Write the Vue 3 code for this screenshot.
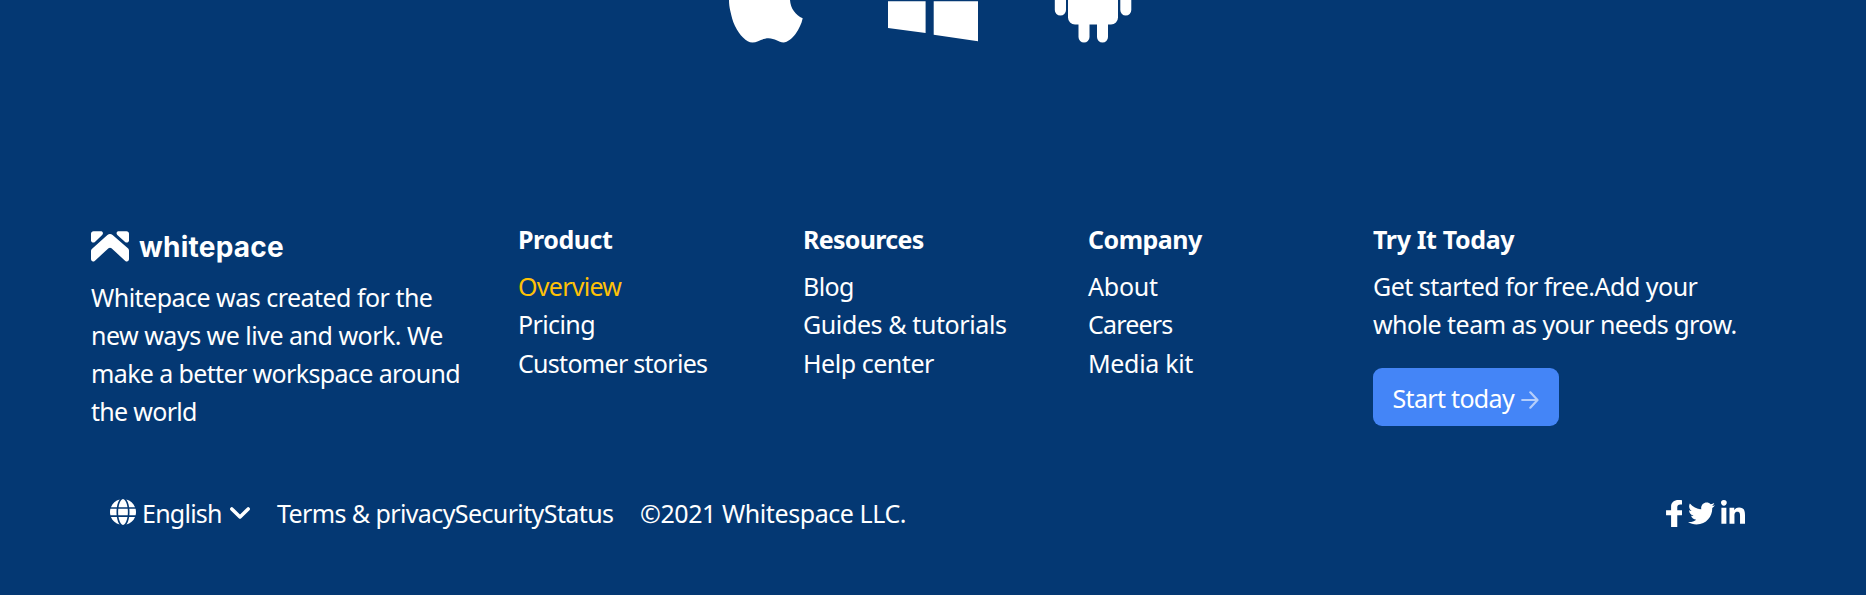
<script setup>
const about = [
  { text: 'Whitepace was created for the', track: -0.52 },
  { text: 'new ways we live and work. We', track: -0.5 },
  { text: 'make a better workspace around', track: -0.63 },
  { text: 'the world', track: -0.7 },
]

const columns = [
  {
    title: 'Product',
    track: -0.46,
    links: [
      { text: 'Overview', track: -0.72, active: true },
      { text: 'Pricing', track: -0.6 },
      { text: 'Customer stories', track: -0.71 },
    ],
  },
  {
    title: 'Resources',
    track: -0.7,
    links: [
      { text: 'Blog', track: -0.6 },
      { text: 'Guides & tutorials', track: -0.4 },
      { text: 'Help center', track: -0.46 },
    ],
  },
  {
    title: 'Company',
    track: -0.51,
    links: [
      { text: 'About', track: -0.23 },
      { text: 'Careers', track: -0.83 },
      { text: 'Media kit', track: -0.33 },
    ],
  },
]

const pitch = [
  { text: 'Get started for free.Add your', track: -0.5 },
  { text: 'whole team as your needs grow.', track: -0.53 },
]

const tracking = (item) => ({ letterSpacing: item.track + 'px' })
</script>

<template>
  <footer class="page">
    <div class="platforms">
      <svg class="apple" width="76" height="45" viewBox="0 0 76 45" fill="#fff">
        <path d="M2 0C2 4 2.500 7 3.200 10.500C4.500 16 5.500 21 8 26C10.500 31 13 34.500 16 37.500C19.500 41 22 42.500 25.500 42.500C30.500 42.500 35 38.300 41.500 38.300C48 38.300 51.500 42.500 56.500 42.500C60.500 42.500 65.500 38 68.500 34C72 29 74.500 24 75.700 18.300C68.500 15 63.500 8.500 63 0Z" />
      </svg>
      <svg class="windows" width="90" height="45" viewBox="0 0 90 45" fill="#fff">
        <path d="M0 1.200H37.600V33L0 28ZM45.700 1.200H90V41.300L45.700 34.800Z" />
      </svg>
      <svg class="android" width="78" height="45" viewBox="0 0 78 45" fill="#fff">
        <path d="M0.800 0H12V10a5.600 5.600 0 0 1-11.200 0ZM66.300 0H77.300V10a5.500 5.500 0 0 1-11 0ZM14 0H64V17.500a7 7 0 0 1-7 7H54V37a5.500 5.500 0 0 1-11 0V24.500H35.500V37a5.500 5.500 0 0 1-11 0V24.500H21a7 7 0 0 1-7-7Z" />
      </svg>
    </div>

    <div class="columns">
      <section class="brand">
        <div class="logo">
          <svg width="38" height="31" viewBox="0 0 38 31" fill="#fff">
            <path d="M2.500 0.300H9.600C11.800 0.300 12.700 2.400 11.200 3.900L3.900 10.900C2.400 12.300 0 11.300 0 9.200V2.800C0 1.400 1.100 0.300 2.500 0.300Z" />
            <path d="M35.500 0.300H27.900C25.700 0.300 24.800 2.400 26.300 3.900L34.100 11C35.600 12.300 38 11.300 38 9.200V2.800C38 1.400 36.900 0.300 35.500 0.300Z" />
            <path d="M16.400 4.100C18 2.600 20 2.600 21.600 4.100L36.900 17.300C37.700 18 38 18.800 38 19.800V28.100C38 30.300 35.900 31.200 34.300 29.900L20.500 17.300C19.500 16.400 18.500 16.400 17.500 17.300L3.700 29.900C2.100 31.200 0 30.300 0 28.100V20.200C0 19.200 0.300 18.400 1.100 17.700Z" />
          </svg>
          <span class="wordmark">whitepace</span>
        </div>
        <p v-for="line in about" :key="line.text" class="line" :style="tracking(line)">{{ line.text }}</p>
      </section>

      <section v-for="column in columns" :key="column.title">
        <h2 :style="tracking(column)">{{ column.title }}</h2>
        <ul>
          <li v-for="link in column.links" :key="link.text" :class="{ active: link.active }" :style="tracking(link)">{{ link.text }}</li>
        </ul>
      </section>

      <section>
        <h2 class="try">Try It Today</h2>
        <p v-for="line in pitch" :key="line.text" class="line" :style="tracking(line)">{{ line.text }}</p>
        <button type="button" class="cta">
          <span>Start today</span>
          <svg width="18" height="18" viewBox="0 0 18 18" fill="none" stroke="#fff" stroke-width="2.200" stroke-linecap="round" stroke-linejoin="round">
            <path d="M1.200 9H16.300M9.300 1.300L16.500 9L9.300 16.700" />
          </svg>
        </button>
      </section>
    </div>

    <div class="bottom">
      <svg class="globe" width="26" height="26" viewBox="0 0 512 512" fill="#fff">
        <path d="M352 256c0 22.200-1.200 43.600-3.300 64H163.300c-2.200-20.400-3.300-41.800-3.300-64s1.200-43.600 3.300-64H348.700c2.200 20.400 3.300 41.800 3.300 64zm28.800-64H503.900c5.300 20.500 8.100 41.900 8.100 64s-2.800 43.500-8.100 64H380.800c2.100-20.600 3.200-42 3.200-64s-1.100-43.400-3.200-64zm112.600-32H376.700c-10-63.900-29.800-117.400-55.300-151.600c78.300 20.700 142 77.500 171.900 151.600zm-149.100 0H167.700c6.100-36.400 15.500-68.600 27-94.700c10.500-23.600 22.200-40.700 33.500-51.500C239.400 3.200 248.700 0 256 0s16.600 3.200 27.800 13.800c11.300 10.800 23 27.900 33.500 51.500c11.600 26 20.900 58.200 27 94.700zm-209 0H18.600C48.600 85.900 112.200 29.100 190.600 8.400C165.100 42.600 145.300 96.100 135.300 160zM8.100 192H131.200c-2.100 20.600-3.200 42-3.200 64s1.100 43.400 3.200 64H8.100C2.800 299.500 0 278.100 0 256s2.800-43.500 8.100-64zM194.700 446.600c-11.600-26-20.900-58.200-27-94.600H344.300c-6.100 36.400-15.500 68.600-27 94.600c-10.500 23.600-22.200 40.700-33.500 51.500C272.600 508.800 263.300 512 256 512s-16.600-3.200-27.800-13.800c-11.300-10.800-23-27.900-33.500-51.500zM135.300 352c10 63.900 29.800 117.400 55.300 151.600C112.200 482.900 48.600 426.100 18.600 352H135.300zm358.100 0c-30 74.100-93.600 130.900-171.900 151.600c25.500-34.200 45.200-87.700 55.300-151.600H493.400z" />
      </svg>
      <span class="language">English</span>
      <svg class="chevron" width="20" height="12" viewBox="0 0 20 12" fill="none" stroke="#fff" stroke-width="3.500" stroke-linecap="round" stroke-linejoin="round">
        <path d="M1.800 1.900L10 9.900L18.200 1.900" />
      </svg>
      <span class="legal">Terms &amp; privacySecurityStatus</span>
      <span class="copyright">©2021 Whitespace LLC.</span>
      <div class="social">
        <svg width="16" height="27" viewBox="22 0 259 512" preserveAspectRatio="none" fill="#fff">
          <path d="M279.140 288l14.220-92.660h-88.910v-60.130c0-25.350 12.420-50.060 52.240-50.060h40.420V6.260S260.430 0 225.360 0c-73.220 0-121.080 44.380-121.080 124.720v70.620H22.890V288h81.390v224h100.170V288z" />
        </svg>
        <svg width="27" height="27" viewBox="0 0 512 512" fill="#fff">
          <path d="M459.370 151.716c.325 4.548.325 9.097.325 13.645 0 138.720-105.583 298.558-298.558 298.558-59.452 0-114.680-17.219-161.137-47.106 8.447.974 16.568 1.299 25.340 1.299 49.055 0 94.213-16.568 130.274-44.832-46.132-.975-84.792-31.188-98.112-72.772 6.498.974 12.995 1.624 19.818 1.624 9.421 0 18.843-1.300 27.614-3.573-48.081-9.747-84.143-51.980-84.143-102.985v-1.299c13.969 7.797 30.214 12.670 47.431 13.319-28.264-18.843-46.781-51.005-46.781-87.391 0-19.492 5.197-37.360 14.294-52.954 51.655 63.675 129.300 105.258 216.365 109.807-1.624-7.797-2.599-15.918-2.599-24.040 0-57.828 46.782-104.934 104.934-104.934 30.213 0 57.502 12.670 76.670 33.137 23.715-4.548 46.456-13.320 66.599-25.340-7.798 24.366-24.366 44.833-46.132 57.827 21.117-2.273 41.584-8.122 60.426-16.243-14.292 20.791-32.161 39.308-52.628 54.253z" />
        </svg>
        <svg width="24" height="27" viewBox="0 0 448 512" preserveAspectRatio="none" fill="#fff">
          <path d="M100.280 448H7.400V148.900h92.880zM53.790 108.100C24.090 108.100 0 83.500 0 53.800a53.790 53.790 0 0 1 107.580 0c0 29.700-24.100 54.300-53.790 54.300zM447.900 448h-92.680V302.400c0-34.700-.7-79.200-48.290-79.200-48.290 0-55.690 37.700-55.690 76.700V448h-92.780V148.900h89.080v40.800h1.300c12.400-23.500 42.690-48.300 87.880-48.300 94 0 111.280 61.900 111.280 142.300V448z" />
        </svg>
      </div>
    </div>
  </footer>
</template>

<style scoped>
.page {
  box-sizing: border-box;
  width: 1866px;
  height: 595px;
  overflow: hidden;
  background: #043873;
  color: #fff;
  font: 400 25px/38.2px "Noto Sans", sans-serif;
  white-space: nowrap;
}
.platforms {
  display: flex;
  height: 45px;
  padding-left: 727px;
}
.windows { margin-left: 85px; }
.android { margin-left: 76px; }
.columns {
  display: grid;
  grid-template-columns: 427px 285px 285px 285px 1fr;
  height: 263px;
  margin-top: 175px;
  padding-left: 91px;
}
.brand { line-height: 38px; }
.logo {
  display: flex;
  height: 58px;
  box-sizing: border-box;
  padding-top: 11px;
}
.wordmark {
  margin: -1.500px 0 0 10px;
  font: 700 28px/34px Inter, sans-serif;
  letter-spacing: 0.230px;
}
.line { margin: 0; }
h2 {
  margin: 0 0 9px;
  font-size: 25px;
  font-weight: 700;
  line-height: 38.200px;
}
.try { letter-spacing: -0.360px; }
ul {
  margin: 0;
  padding: 0;
  list-style: none;
}
.active { color: #ffc107; }
.cta {
  display: flex;
  align-items: center;
  box-sizing: border-box;
  width: 186px;
  height: 58px;
  margin-top: 24.600px;
  padding: 2px 0 0 19.500px;
  border: 0;
  border-radius: 9px;
  background: #4485f7;
  color: #fff;
  font: inherit;
  letter-spacing: -0.680px;
}
.cta svg {
  margin: 3px 0 0 7.500px;
  opacity: 0.600;
}
.bottom {
  display: flex;
  align-items: flex-start;
  margin-top: 11px;
  padding-left: 109.500px;
}
.globe { margin-top: 4.500px; }
.language {
  width: 85px;
  margin-left: 6.500px;
  letter-spacing: -0.760px;
}
.chevron {
  margin-top: 12.500px;
  margin-left: 3px;
}
.legal {
  width: 363px;
  margin-left: 27px;
  letter-spacing: -0.605px;
}
.copyright { letter-spacing: -0.420px; }
.social {
  display: flex;
  gap: 6px;
  margin: 5.500px 121.500px 0 auto;
}
</style>
